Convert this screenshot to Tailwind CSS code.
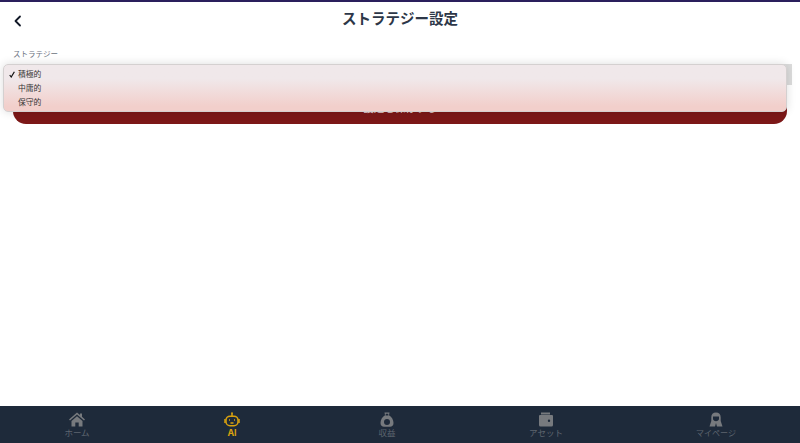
<!DOCTYPE html>
<html lang="ja">
<head>
  <meta charset="UTF-8" />
  <title>ストラテジー設定</title>
  <script src="https://cdn.jsdelivr.net/npm/@tailwindcss/browser@4"></script>
</head>
<body class="bg-white font-['Inter','Noto_Sans_CJK_JP',sans-serif]">
  <div class="relative flex h-[443px] w-[800px] flex-col overflow-hidden">
    <!-- header -->
    <header class="relative flex h-[38px] items-center justify-center border-t-2 border-[#2a1f5c] pb-[2px]">
      <svg class="absolute left-[13px] top-[13px] h-[12px] w-[10px]" viewBox="0 0 10 12" fill="none" stroke="#111827" stroke-width="1.8" stroke-linecap="round" stroke-linejoin="round"><path d="M7 1.5 L2.5 6 L7 10.5"/></svg>
      <h1 class="text-[14.5px] font-bold text-[#2d3748]">ストラテジー設定</h1>
    </header>

    <main class="relative flex-1 px-[13px] pt-[11px]">
      <label class="block text-[7.5px] leading-[12px] text-[#6b7280]">ストラテジー</label>
      <div class="mt-[3px] h-[21px] w-[779px] bg-[#dcdcdc]"></div>
      <button class="mt-[10px] flex h-[29px] w-[774px] items-end justify-center rounded-b-[13px] bg-[#7c1818] pb-[10px] text-[10.5px] leading-none text-white/80">設定を保存する</button>

      <!-- open select menu -->
      <div class="absolute left-[3px] top-[26px] flex h-[48px] w-[784px] flex-col justify-center rounded-[5px] border border-[#d4d0d0] bg-gradient-to-b from-[#f0e8ea] from-30% to-[#f2cfcb] to-90% text-[7.8px] leading-[14px] text-[#333] shadow-[0_0_10px_rgba(0,0,0,0.14)]">
        <div class="flex items-center">
          <svg class="ml-[5px] mr-[3px] h-[7px] w-[6px]" viewBox="0 0 6 7" fill="none" stroke="#111" stroke-width="1.2"><path d="M0.7 4 L2.2 6 L5.4 0.8"/></svg>
          <span>積極的</span>
        </div>
        <div class="pl-[14px]">中庸的</div>
        <div class="pl-[14px]">保守的</div>
      </div>
    </main>

    <!-- bottom nav -->
    <nav class="grid h-[37px] grid-cols-[154px_156px_154px_164px_1fr] bg-[#1e2a3a] text-[8.5px] leading-[10px] text-[#5f6670]">
      <div class="flex flex-col items-center pt-[6px]">
        <svg class="h-[15px] w-[16px]" viewBox="0 0 16 15" fill="#777a7e"><path d="M8 0.5 L11 3 V1.5 H13 V4.7 L16 7.5 L15 8.5 L8 2.6 L1 8.5 L0 7.5 Z M2.5 9 L8 4.2 L13.5 9 V14.5 H9.7 V10.5 H6.3 V14.5 H2.5 Z"/></svg>
        <span class="mt-[1px]">ホーム</span>
      </div>
      <div class="flex flex-col items-center pt-[6px] text-[9px] font-bold text-[#d9a10f]">
        <svg class="h-[15px] w-[16px]" viewBox="0 0 16 15" fill="none" stroke="#d9a10f" stroke-width="1.5"><circle cx="8" cy="1.3" r="1" fill="#d9a10f" stroke="none"/><path d="M8 2 V4"/><rect x="2" y="4.2" width="12" height="9.5" rx="4"/><path d="M1 7 V11 M15 7 V11"/><path d="M5 8 H6 M10 8 H11 M6.5 11 H9.5" stroke-width="1.3"/></svg>
        <span class="mt-[1px]">AI</span>
      </div>
      <div class="flex flex-col items-center pt-[6px]">
        <svg class="h-[15px] w-[16px]" viewBox="0 0 16 15" fill="#777a7e"><path fill-rule="evenodd" d="M5.5 0.5 H10.5 L10 3.2 C12.8 4.8 14.5 8 14.5 11 C14.5 13.5 13 14.8 11 14.8 H5 C3 14.8 1.5 13.5 1.5 11 C1.5 8 3.2 4.8 6 3.2 Z M8 7 A3 3 0 1 0 8 13 A3 3 0 1 0 8 7 Z M6.8 1.8 L6.5 3.6 H9.5 L9.2 1.8 Z"/></svg>
        <span class="mt-[1px]">収益</span>
      </div>
      <div class="flex flex-col items-center pt-[6px]">
        <svg class="h-[15px] w-[16px]" viewBox="0 0 16 15" fill="#777a7e"><path fill-rule="evenodd" d="M3 0.5 H12 V2.5 H3 Z M2 3 H14 A1 1 0 0 1 15 4 V13 A1.5 1.5 0 0 1 13.5 14.5 H2.5 A1.5 1.5 0 0 1 1 13 V4 A1 1 0 0 1 2 3 Z M11 7.5 A1.2 1.2 0 1 0 11 9.9 A1.2 1.2 0 1 0 11 7.5 Z"/></svg>
        <span class="mt-[1px]">アセット</span>
      </div>
      <div class="flex flex-col items-center pl-[4px] pt-[6px] text-[8px]">
        <svg class="h-[15px] w-[16px]" viewBox="0 0 16 15" fill="#777a7e"><path fill-rule="evenodd" d="M8 0.5 C11 0.5 12.7 2.6 12.7 5.2 V9 L14.5 14.5 H9 L8 11 L7 14.5 H1.5 L3.3 9 V5.2 C3.3 2.6 5 0.5 8 0.5 Z M5 4.5 H11 V7 C11 8.2 9.5 9.3 8 9.3 C6.5 9.3 5 8.2 5 7 Z"/></svg>
        <span class="mt-[1px]">マイページ</span>
      </div>
    </nav>
  </div>
</body>
</html>
